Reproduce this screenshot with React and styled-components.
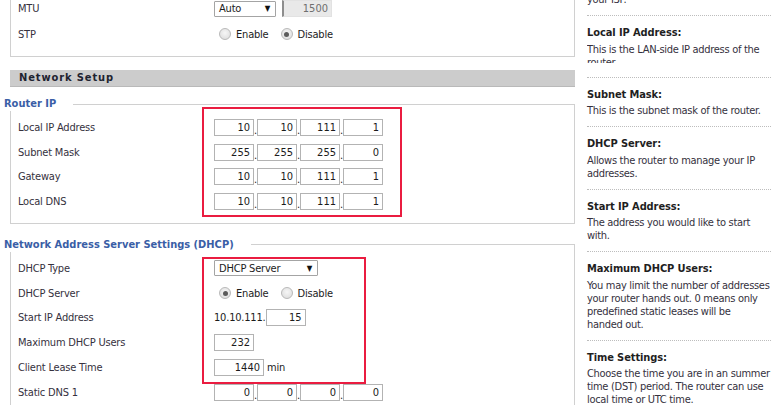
import React from "react";
import styled, { createGlobalStyle } from "styled-components";

const GlobalStyle = createGlobalStyle`
  html, body {
    margin: 0;
    padding: 0;
    background: #fff;
  }
  body {
    font-family: "DejaVu Sans Condensed", Tahoma, "DejaVu Sans", sans-serif;
    font-size: 11px;
    letter-spacing: -0.2px;
    color: #35313d;
    overflow: hidden;
  }
`;

const Page = styled.div`
  display: flex;
  width: 780px;
  height: 405px;
  overflow: hidden;
`;

const Main = styled.div`
  flex: none;
  width: 565px;
  padding-left: 10px;
`;

const Fieldset = styled.fieldset`
  position: relative;
  min-width: 0;
  margin: ${({ $gap }) => $gap ?? 13}px 0 0;
  padding: 4px 0 9px 7px;
  border: 1px solid #d0d0d0;

  ${({ $cut }) =>
    $cut &&
    `
    margin-top: -4px;
    padding-top: 0;
    padding-bottom: 9px;
    border-top: none;
  `}
`;

const Legend = styled.legend`
  margin-left: -14px;
  padding: 0 17px 0 0;
  font-size: 11px;
  font-weight: bold;
  line-height: 14px;
  letter-spacing: 0;
  color: #3a5ea6;
`;

const SectionTitle = styled.h2`
  margin: 13px 0 0;
  height: 16px;
  padding-left: 9px;
  background: #cccccc;
  border-bottom: 1px solid #b9b9b9;
  font-size: 11px;
  font-weight: bold;
  line-height: 16px;
  letter-spacing: 0.9px;
  color: #1e2330;
`;

const Rows = styled.div`
  position: relative;
`;

const Row = styled.div`
  display: grid;
  grid-template-columns: 196px 1fr;
  align-items: center;
  height: ${({ $h }) => $h || 24.7}px;
`;

const Label = styled.div`
  white-space: nowrap;
`;

const Control = styled.div`
  display: flex;
  align-items: center;
  color: #1c1c1c;
`;

const Highlight = styled.div`
  position: absolute;
  left: 184px;
  top: ${({ $top }) => $top}px;
  width: ${({ $w }) => $w}px;
  height: ${({ $h }) => $h}px;
  box-sizing: border-box;
  border: 2px solid #ea1c40;
  pointer-events: none;
`;

const Field = styled.input`
  width: ${({ $w }) => $w || 40}px;
  height: 17px;
  box-sizing: border-box;
  margin: 0;
  padding: 0 3px 0 0;
  border: 1px solid #b3b3b3;
  background: #fff;
  font: inherit;
  letter-spacing: 0;
  color: #1c1c1c;
  text-align: right;
  outline: none;
`;

const DisabledField = styled(Field)`
  margin-left: 6px;
  background: #e9e9e9;
  border-color: #e2e2e2;
  border-left: 2px solid #8d8d8d;
  color: #6f6f6f;
`;

const IpGroup = styled.div`
  display: flex;
  align-items: flex-end;
`;

const Dot = styled.span`
  width: 3px;
  line-height: 11px;
  text-align: center;
`;

const Select = styled.div`
  display: flex;
  align-items: center;
  justify-content: space-between;
  width: ${({ $w }) => $w}px;
  height: 16px;
  box-sizing: border-box;
  padding: 0 5px 0 4px;
  border: 1px solid #a4a4a4;
  border-radius: 1px;
  background: #fff;
  color: #1c1c1c;
`;

const Arrow = styled.span`
  font-size: 8px;
  color: #111;
`;

const RadioGroup = styled.div`
  display: flex;
  align-items: center;
  margin-left: 5px;
`;

const RadioDot = styled.span`
  position: relative;
  width: 12px;
  height: 12px;
  box-sizing: border-box;
  border: 1px solid #b9b9b9;
  border-radius: 50%;
  background: radial-gradient(circle at 50% 40%, #f6f6f6, #d9d9d9);

  &::after {
    content: "";
    display: ${({ $on }) => ($on ? "block" : "none")};
    position: absolute;
    inset: 2.5px;
    border-radius: 50%;
    background: #5b5b5b;
  }
`;

const RadioText = styled.span`
  margin: 1px 12px 0 5px;
`;

const Unit = styled.span`
  margin-left: 3px;
`;

const Help = styled.aside`
  flex: none;
  width: 186px;
  margin-top: -7px;
  padding-left: 12px;
`;

const HelpItem = styled.div`
  width: 184px;
  padding: 9px 0 9px;
  border-top: 1px dotted #bdbdbd;

  &:first-child {
    padding-top: 0;
    border-top: none;
  }
`;

const HelpTitle = styled.div`
  margin-bottom: 2.5px;
  font-size: 11px;
  font-weight: bold;
  line-height: 15px;
  letter-spacing: -0.1px;
  color: #1f1f1f;
`;

const HelpText = styled.div`
  width: 192px;
  line-height: 13px;
  letter-spacing: -0.3px;
  white-space: pre-line;
  ${({ $clip }) => $clip && `height: ${$clip}px; overflow: hidden; margin-bottom: 5px;`}
`;

const Radios = ({ value }) => (
  <RadioGroup>
    <RadioDot $on={value === "enable"} />
    <RadioText>Enable</RadioText>
    <RadioDot $on={value === "disable"} />
    <RadioText>Disable</RadioText>
  </RadioGroup>
);

const Ip = ({ parts }) => (
  <IpGroup>
    {parts.map((p, i) => (
      <React.Fragment key={i}>
        {i > 0 && <Dot>.</Dot>}
        <Field defaultValue={p} readOnly />
      </React.Fragment>
    ))}
  </IpGroup>
);

const help = [
  { text: "your ISP." },
  { title: "Local IP Address:", text: "This is the LAN-side IP address of the\nrouter.", clip: 20 },
  { title: "Subnet Mask:", text: "This is the subnet mask of the router." },
  { title: "DHCP Server:", text: "Allows the router to manage your IP\naddresses." },
  { title: "Start IP Address:", text: "The address you would like to start\nwith." },
  {
    title: "Maximum DHCP Users:",
    text: "You may limit the number of addresses\nyour router hands out. 0 means only\npredefined static leases will be\nhanded out.",
  },
  {
    title: "Time Settings:",
    text: "Choose the time you are in an summer\ntime (DST) period. The router can use\nlocal time or UTC time.",
  },
];

export default function App() {
  return (
    <>
      <GlobalStyle />
      <Page>
        <Main>
          <Fieldset $cut>
            <Row $h={25}>
              <Label>MTU</Label>
              <Control>
                <Select $w={62}>
                  Auto <Arrow>▼</Arrow>
                </Select>
                <DisabledField $w={50} defaultValue="1500" readOnly />
              </Control>
            </Row>
            <Row $h={26}>
              <Label>STP</Label>
              <Control>
                <Radios value="disable" />
              </Control>
            </Row>
          </Fieldset>

          <SectionTitle>Network Setup</SectionTitle>

          <Fieldset $gap={10}>
            <Legend>Router IP</Legend>
            <Rows>
              <Highlight $top={-8} $w={200} $h={110} />
              <Row>
                <Label>Local IP Address</Label>
                <Control>
                  <Ip parts={["10", "10", "111", "1"]} />
                </Control>
              </Row>
              <Row>
                <Label>Subnet Mask</Label>
                <Control>
                  <Ip parts={["255", "255", "255", "0"]} />
                </Control>
              </Row>
              <Row>
                <Label>Gateway</Label>
                <Control>
                  <Ip parts={["10", "10", "111", "1"]} />
                </Control>
              </Row>
              <Row>
                <Label>Local DNS</Label>
                <Control>
                  <Ip parts={["10", "10", "111", "1"]} />
                </Control>
              </Row>
            </Rows>
          </Fieldset>

          <Fieldset $gap={14}>
            <Legend>Network Address Server Settings (DHCP)</Legend>
            <Rows>
              <Highlight $top={1.5} $w={164} $h={127} />
              <Row $h={24.9}>
                <Label>DHCP Type</Label>
                <Control>
                  <Select $w={104}>
                    DHCP Server <Arrow>▼</Arrow>
                  </Select>
                </Control>
              </Row>
              <Row $h={24.9}>
                <Label>DHCP Server</Label>
                <Control>
                  <Radios value="enable" />
                </Control>
              </Row>
              <Row $h={24.9}>
                <Label>Start IP Address</Label>
                <Control>
                  10.10.111.
                  <Field defaultValue="15" readOnly />
                </Control>
              </Row>
              <Row $h={24.9}>
                <Label>Maximum DHCP Users</Label>
                <Control>
                  <Field defaultValue="232" readOnly />
                </Control>
              </Row>
              <Row $h={24.9}>
                <Label>Client Lease Time</Label>
                <Control>
                  <Field $w={50} defaultValue="1440" readOnly />
                  <Unit>min</Unit>
                </Control>
              </Row>
              <Row $h={24.9}>
                <Label>Static DNS 1</Label>
                <Control>
                  <Ip parts={["0", "0", "0", "0"]} />
                </Control>
              </Row>
            </Rows>
          </Fieldset>
        </Main>

        <Help>
          {help.map((h, i) => (
            <HelpItem key={i}>
              {h.title && <HelpTitle>{h.title}</HelpTitle>}
              <HelpText $clip={h.clip}>{h.text}</HelpText>
            </HelpItem>
          ))}
        </Help>
      </Page>
    </>
  );
}
